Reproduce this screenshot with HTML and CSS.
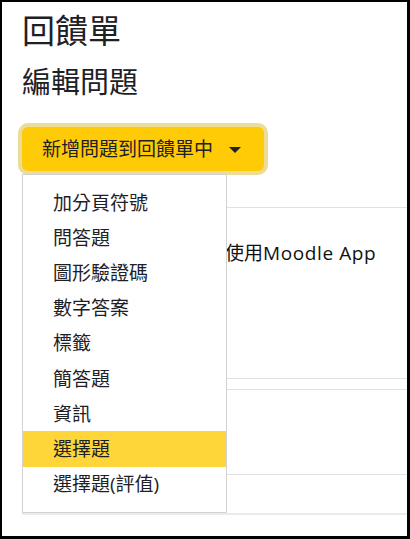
FILE: index.html
```html
<!DOCTYPE html>
<html lang="zh-Hant">
<head>
<meta charset="utf-8">
<title>回饋單</title>
<link rel="stylesheet" href="styles.css">
</head>
<body>
<div class="page">
  <h1 class="title">回饋單</h1>
  <h2 class="subtitle">編輯問題</h2>
  <div class="add-group">
    <button class="add-btn" type="button">
      <span>新增問題到回饋單中</span>
      <span class="caret"></span>
    </button>
    <ul class="menu">
      <li class="menu-item">加分頁符號</li>
      <li class="menu-item">問答題</li>
      <li class="menu-item">圖形驗證碼</li>
      <li class="menu-item">數字答案</li>
      <li class="menu-item">標籤</li>
      <li class="menu-item">簡答題</li>
      <li class="menu-item">資訊</li>
      <li class="menu-item active">選擇題</li>
      <li class="menu-item">選擇題(評值)</li>
    </ul>
  </div>
  <div class="sections">
    <div class="section s1">
      <div class="row">
        <div class="label"></div>
        <div class="value">使用<span class="latin">Moodle App</span></div>
      </div>
    </div>
    <div class="section s2"></div>
    <div class="section s3"></div>
    <div class="section s4"></div>
  </div>
</div>
</body>
</html>
```

FILE: styles.css
```css
html, body {
  margin: 0;
  padding: 0;
}
body {
  height: 539px;
  box-sizing: border-box;
  border-style: solid;
  border-color: #000;
  border-width: 2px 3px 3px 2px;
  background: #fff;
  overflow: hidden;
  color: #1d2125;
  font-family: "Open Sans", "Noto Sans CJK TC", sans-serif;
}
.page {
  padding: 9px 0 0 20px;
}
.title {
  margin: 0;
  font-size: 33px;
  line-height: 40px;
  font-weight: 400;
}
.subtitle {
  margin: 13px 0 0;
  font-size: 29px;
  line-height: 36px;
  font-weight: 400;
}
.add-group {
  position: relative;
  margin-top: 27px;
  width: max-content;
}
.add-btn {
  display: flex;
  align-items: center;
  gap: 16px;
  height: 44px;
  padding: 0 23px 0 20px;
  border: none;
  border-radius: 6px;
  background: #fecb06;
  color: #1d2125;
  font-family: inherit;
  font-size: 19px;
  line-height: 28px;
  box-shadow: 0 0 0 4px #eddc98;
}
.caret {
  width: 0;
  height: 0;
  border-left: 6px solid transparent;
  border-right: 6px solid transparent;
  border-top: 6px solid #1d2125;
  margin-top: 2px;
}
.menu {
  position: absolute;
  top: calc(100% + 3px);
  left: 0;
  z-index: 2;
  width: 205px;
  box-sizing: border-box;
  margin: 0;
  padding: 10px 0;
  list-style: none;
  background: #fff;
  border: 1px solid #d2d2d2;
}
.menu-item {
  padding: 3.6px 30px;
  font-size: 19px;
  line-height: 28px;
  white-space: nowrap;
}
.menu-item.active {
  background: #fed63a;
}
.sections {
  margin-top: 36px;
}
.section {
  border-top: 1px solid #dee2e6;
}
.s1 {
  padding: 31px 0 111px;
}
.row {
  display: grid;
  grid-template-columns: 203px 1fr;
}
.value {
  font-size: 19px;
  line-height: 28px;
  white-space: nowrap;
  color: #111;
}
.latin {
  letter-spacing: 0.6px;
}
.s2 {
  height: 10px;
}
.s3 {
  height: 84px;
}
.s4 {
  height: 38px;
  border-bottom: 2px solid #e9ecef;
}
```
